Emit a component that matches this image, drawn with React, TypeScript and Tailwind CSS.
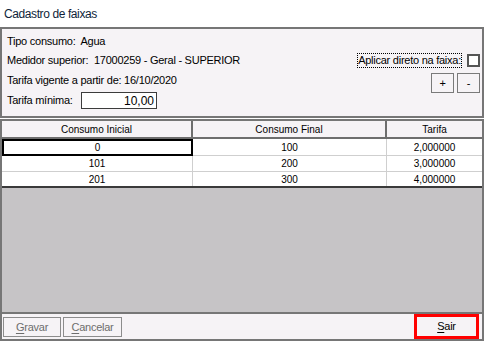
export default function App() {
  return (
    <div className="w-[485px] h-[341px] bg-white flex flex-col font-['Liberation_Sans',Arial,sans-serif] text-[11px] text-black tracking-[-0.25px] overflow-hidden">
      <div className="h-[27px] shrink-0 pl-[4px] flex items-center text-[12px] tracking-[-0.4px] text-[#0f1f3a]">
        Cadastro de faixas
      </div>

      <div className="w-[484px] h-[91px] shrink-0 border-2 border-[#767676] bg-[#f6f3f6] flex justify-between">
        <div className="flex flex-col pt-[2px] pl-[5px]">
          <div className="h-[20px] flex items-center whitespace-pre">Tipo consumo:  Agua</div>
          <div className="h-[19px] flex items-center whitespace-pre">Medidor superior:  17000259 - Geral - SUPERIOR</div>
          <div className="h-[20px] flex items-center whitespace-pre">Tarifa vigente a partir de: 16/10/2020</div>
          <div className="h-[21px] flex items-center">
            <span className="w-[74px]">Tarifa mínima:</span>
            <div className="w-[76px] h-[17px] border border-[#3c3c3c] bg-white flex items-center justify-end pr-[2px] text-[12px] tracking-normal">
              10,00
            </div>
          </div>
        </div>
        <div className="flex flex-col items-end pt-[24px] pr-[2px] gap-[5px]">
          <div className="flex items-center gap-[5px] h-[15px]">
            <div className="h-[15px] border border-dotted border-black flex items-center leading-none">
              Aplicar direto na faixa:
            </div>
            <div className="w-[13px] h-[13px] border-2 border-[#555555] bg-white" />
          </div>
          <div className="flex gap-[3px]">
            <div className="w-[23px] h-[20px] border border-[#7a7a7a] flex items-center justify-center">+</div>
            <div className="w-[23px] h-[20px] border border-[#7a7a7a] flex items-center justify-center">-</div>
          </div>
        </div>
      </div>

      <div className="mt-[1px] w-[484px] h-[193px] shrink-0 border-2 border-b-0 border-[#767676] bg-[#c6c4c6] flex flex-col text-[10px] tracking-normal">
        <div className="h-[18px] flex bg-[#f6f3f6] border-b-2 border-[#6e6e6e]">
          <div className="w-[191px] border-r-2 border-[#6e6e6e] flex items-center justify-center">Consumo Inicial</div>
          <div className="w-[194px] border-r-2 border-[#6e6e6e] flex items-center justify-center">Consumo Final</div>
          <div className="w-[95px] flex items-center justify-center">Tarifa</div>
        </div>
        <div className="h-[17px] flex bg-white">
          <div className="w-[191px] border-2 border-black flex items-center justify-center">0</div>
          <div className="w-[194px] border-r border-b border-[#cfcfcf] flex items-center justify-center">100</div>
          <div className="w-[95px] border-b border-[#cfcfcf] flex items-center justify-center">2,000000</div>
        </div>
        <div className="h-[16px] flex bg-white border-b border-[#cfcfcf]">
          <div className="w-[191px] border-r border-[#cfcfcf] flex items-center justify-center">101</div>
          <div className="w-[194px] border-r border-[#cfcfcf] flex items-center justify-center">200</div>
          <div className="w-[95px] flex items-center justify-center">3,000000</div>
        </div>
        <div className="h-[16px] flex bg-white border-b-2 border-[#3a3a3a]">
          <div className="w-[191px] border-r border-[#cfcfcf] flex items-center justify-center">201</div>
          <div className="w-[194px] border-r border-[#cfcfcf] flex items-center justify-center">300</div>
          <div className="w-[95px] flex items-center justify-center">4,000000</div>
        </div>
      </div>

      <div className="w-[484px] h-[29px] shrink-0 border-2 border-[#767676] bg-[#f6f3f6] flex justify-between">
        <div className="flex gap-[2px] pl-[1px] pt-[3px]">
          <div className="w-[58px] h-[20px] border border-[#8c8c8c] text-[#6d6d6d] flex items-center justify-center">
            <span className="underline underline-offset-2">G</span>ravar
          </div>
          <div className="w-[59px] h-[20px] border border-[#8c8c8c] text-[#6d6d6d] flex items-center justify-center">
            <span className="underline underline-offset-2">C</span>ancelar
          </div>
        </div>
        <div className="mr-[3px] w-[65px] h-[25px] border-[3px] border-[#ff0000] bg-[#f6f3f6] flex items-center justify-center">
          <span className="underline underline-offset-2">S</span>air
        </div>
      </div>
    </div>
  );
}
